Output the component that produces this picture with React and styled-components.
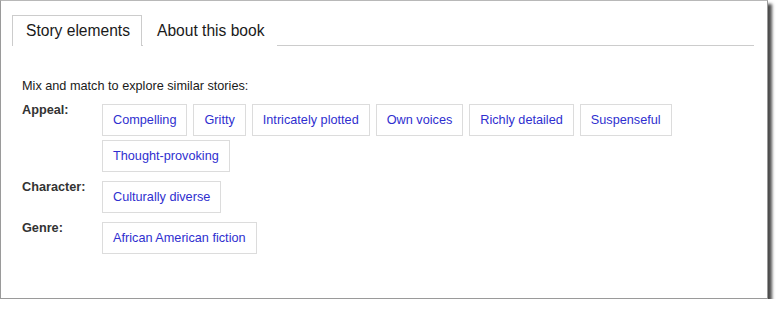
import React, { useState } from 'react';
import styled, { createGlobalStyle } from 'styled-components';

const GlobalStyle = createGlobalStyle`
  body {
    margin: 0;
    background: #ffffff;
    font-family: 'Liberation Sans', Arial, sans-serif;
  }
`;

const Card = styled.div`
  box-sizing: border-box;
  width: 768px;
  height: 299px;
  border: 1px solid #9a9a9a;
  border-top-color: #b8b8b8;
  background: #ffffff;
  box-shadow: 4px 4px 3px rgba(0, 0, 0, 0.7);
  padding: 14px 13px 0 11px;
`;

const TabBar = styled.div`
  display: flex;
  border-bottom: 1px solid #cccccc;
  height: 30px;
`;

const Tab = styled.button`
  box-sizing: border-box;
  height: 31px;
  padding: 0 11px 0 13px;
  margin-right: 1px;
  font-family: 'Liberation Sans', Arial, sans-serif;
  font-size: 15.6px;
  color: #1a1a1a;
  background: #ffffff;
  border: 1px solid ${p => (p.$active ? '#cccccc' : 'transparent')};
  border-bottom: none;
  cursor: pointer;
`;

const Body = styled.div`
  padding: 32px 0 0 10px;
`;

const Intro = styled.p`
  margin: 0 0 10px;
  font-size: 12.7px;
  line-height: 16px;
  color: #1a1a1a;
`;

const Group = styled.div`
  display: grid;
  grid-template-columns: 80px 1fr;
  margin-bottom: 9px;
`;

const Label = styled.div`
  margin-top: -2px;
  font-size: 12.7px;
  font-weight: bold;
  line-height: 16px;
  color: #333333;
`;

const Chips = styled.div`
  display: flex;
  flex-wrap: wrap;
  column-gap: 6px;
  row-gap: 4px;
`;

const Chip = styled.a`
  box-sizing: border-box;
  height: 32px;
  padding: 7px 10px;
  border: 1px solid #dcdcdc;
  font-size: 12.7px;
  line-height: 16px;
  color: #2f2fcf;
  text-decoration: none;
  cursor: pointer;
`;

const groups = [
  {
    label: 'Appeal:',
    items: [
      'Compelling',
      'Gritty',
      'Intricately plotted',
      'Own voices',
      'Richly detailed',
      'Suspenseful',
      'Thought-provoking',
    ],
  },
  { label: 'Character:', items: ['Culturally diverse'] },
  { label: 'Genre:', items: ['African American fiction'] },
];

export default function App() {
  const [tab, setTab] = useState('story');

  return (
    <>
      <GlobalStyle />
      <Card>
        <TabBar>
          <Tab $active={tab === 'story'} onClick={() => setTab('story')}>
            Story elements
          </Tab>
          <Tab $active={tab === 'about'} onClick={() => setTab('about')}>
            About this book
          </Tab>
        </TabBar>
        <Body>
          <Intro>Mix and match to explore similar stories:</Intro>
          {groups.map(g => (
            <Group key={g.label}>
              <Label>{g.label}</Label>
              <Chips>
                {g.items.map(item => (
                  <Chip key={item}>{item}</Chip>
                ))}
              </Chips>
            </Group>
          ))}
        </Body>
      </Card>
    </>
  );
}
